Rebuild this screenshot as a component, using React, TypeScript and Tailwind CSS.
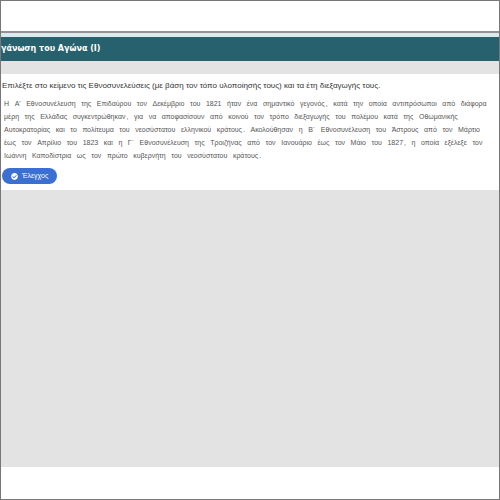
import { Fragment } from 'react';
import { FaCheckCircle } from 'react-icons/fa';

const passage =
  "Η Α' Εθνοσυνέλευση της Επιδαύρου τον Δεκέμβριο του 1821 ήταν ένα σημαντικό γεγονός , κατά την οποία αντιπρόσωποι από διάφορα μέρη της Ελλάδας συγκεντρώθηκαν , για να αποφασίσουν από κοινού τον τρόπο διεξαγωγής του πολέμου κατά της Οθωμανικής Αυτοκρατορίας και το πολίτευμα του νεοσύστατου ελληνικού κράτους . Ακολούθησαν η Β΄ Εθνοσυνέλευση του Άστρους από τον Μάρτιο έως τον Απρίλιο του 1823 και η Γ΄ Εθνοσυνέλευση της Τροιζήνας από τον Ιανουάριο έως τον Μάιο του 1827 , η οποία εξέλεξε τον Ιωάννη Καποδίστρια ως τον πρώτο κυβερνήτη του νεοσύστατου κράτους .";

// punctuation stays attached to the word before it
const words = passage.replace(/ ([,.])/g, '$1').split(' ');

const Word = ({ text }: { text: string }) => {
  const mark = /[,.]$/.test(text) ? text.slice(-1) : '';
  const word = mark ? text.slice(0, -1) : text;
  return <span className="text-[7px] leading-none">
    {word}
    {mark && <span className="pl-px">{mark}</span>}
  </span>;
};

const App = () => {
  return <div className="flex min-h-screen flex-col border border-[#777777] bg-white font-['Liberation_Sans',Arial,sans-serif] text-[#333333]">
    <div className="h-[30px]" />
    <header className="border-t-2 border-[#929494] bg-[#dce9ed] pt-1">
      <h1 className="h-6 overflow-hidden bg-[#27616d] font-['DejaVu_Sans',Verdana,sans-serif] text-[8px] leading-6 font-bold whitespace-nowrap text-white">
        γάνωση του Αγώνα (I)
      </h1>
    </header>

    <main className="mb-8 flex-1 bg-[#e3e3e3] pt-[13px]">
      <section className="bg-white px-px pt-1 pb-[6px]">
        <h2 className="text-[8px] leading-4">
          Επιλέξτε στο κείμενο τις Εθνοσυνελεύσεις (με βάση τον τόπο υλοποίησής τους) και τα έτη διεξαγωγής τους.
        </h2>
        <p className="mt-0.5 pr-1 pl-0.5 text-[10px] leading-[13px] text-[#555555]">
          {words.map((word, i) => <Fragment key={i}>
            <Word text={word} />&nbsp;{' '}
          </Fragment>)}
        </p>
        <button type="button" className="mt-[7px] flex h-4 items-center gap-1 rounded-full bg-[#3b6fd1] px-[9px] text-[7px] leading-4 text-white">
          <FaCheckCircle size={7} />
          Έλεγχος
        </button>
      </section>
    </main>
  </div>;
};

export default App;
